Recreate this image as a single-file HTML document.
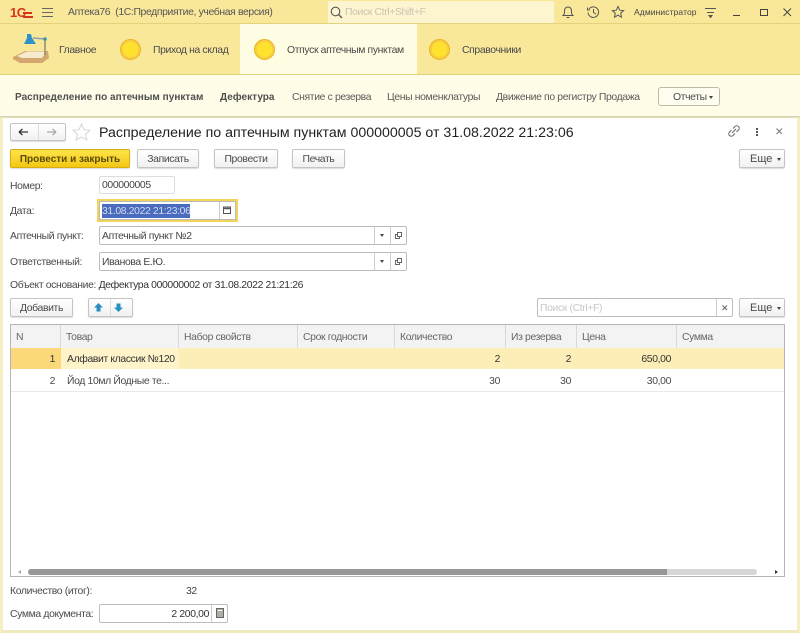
<!DOCTYPE html>
<html lang="ru"><head><meta charset="utf-8"><title>Аптека76</title>
<style>
*{box-sizing:border-box}
html,body{margin:0;padding:0;background:#fff}
#w{position:absolute;left:0;top:0;width:800px;height:633px;overflow:hidden;background:#fff;font-family:"Liberation Sans",sans-serif;font-size:10.4px;letter-spacing:-.36px;color:#4a4a4a;filter:blur(.3px)}
.a{position:absolute}
.t{position:absolute;white-space:nowrap;line-height:16px;height:16px}
.btn{position:absolute;background:linear-gradient(#fff,#f1f1f1);border:1px solid #c4c4c4;border-radius:2px;text-align:center;color:#4a4a4a;box-shadow:0 1px 1px #ddd;line-height:19px;white-space:nowrap}
.inp{position:absolute;background:#fff;border:1px solid #bdbdbd;border-radius:2px;line-height:19px;padding-left:2px;color:#444;white-space:nowrap}
.dd{position:absolute;width:0;height:0;border-left:2px solid transparent;border-right:2px solid transparent;border-top:3px solid #444}
.coin{position:absolute;width:21px;height:21px;border-radius:50%;background:#ffe22e;border:1.5px solid #eeb11c;box-shadow:inset 0 0 0 2px #f7cf45}
.h{position:absolute;top:0;height:23px;line-height:25px;color:#666;background:#f3f3f3;padding-left:5px;border-right:1px solid #d9d9d9;white-space:nowrap}
.b{font-size:10px;font-weight:bold;letter-spacing:.03px;color:#4f4f4f}
</style></head><body><div id="w">

<!-- title bar -->
<div class="a" style="left:0;top:0;width:800px;height:24px;background:#f9e89a;border-bottom:1px solid #e3d27e"></div>
<div class="t" style="left:10px;top:5px;color:#d9341f;font-weight:bold;font-size:13px;letter-spacing:-.5px">1С</div>
<div class="a" style="left:23px;top:12px;width:9px;height:1.500px;background:#d9341f"></div>
<div class="a" style="left:23px;top:16px;width:10px;height:2px;background:#d9341f"></div>
<svg class="a" style="left:42px;top:7px" width="12" height="11"><path d="M0 1.500H11M0 5.500H11M0 9.500H11" stroke="#666" stroke-width="1"/></svg>
<div class="t" style="left:68px;top:5px;color:#555">Аптека76&nbsp; (1С:Предприятие, учебная версия)</div>
<div class="a" style="left:328px;top:1px;width:226px;height:22px;background:#fdf4d0"></div>
<svg class="a" style="left:330px;top:6px" width="13" height="13"><circle cx="5.500" cy="5.500" r="4.300" fill="none" stroke="#555" stroke-width="1.100"/><path d="M8.500 8.500L12 12" stroke="#555" stroke-width="1.300"/></svg>
<div class="t" style="left:345px;top:5px;color:#c9c4b0">Поиск Ctrl+Shift+F</div>
<svg class="a" style="left:561px;top:5px" width="14" height="14" fill="none" stroke="#555"><path d="M2 10.500H12L10.500 8.500V5.500C10.500 3.500 9 2 7 2S3.500 3.500 3.500 5.500V8.500ZM5.500 12.500H8.500"/></svg>
<svg class="a" style="left:586px;top:5px" width="14" height="14" fill="none" stroke="#555"><path d="M3 4A5.300 5.300 0 1 1 2 7.500M1.500 2.500V5H4M7.500 4V7.500L10 9"/></svg>
<svg class="a" style="left:611px;top:5px" width="14" height="14" fill="none" stroke="#555"><path d="M7 1.500L8.700 5.200L12.600 5.600L9.700 8.200L10.500 12.200L7 10.200L3.500 12.200L4.300 8.200L1.400 5.600L5.300 5.200Z"/></svg>
<div class="t" style="left:634px;top:4px;font-size:8.500px;color:#444;letter-spacing:.1px">Администратор</div>
<svg class="a" style="left:705px;top:7px" width="12" height="12" fill="none" stroke="#555"><path d="M0 1.500H11M2 5.500H9"/><path d="M4 8.500H7L5.500 10.500Z" fill="#555"/></svg>
<div class="a" style="left:733px;top:15px;width:7px;height:1px;background:#444"></div>
<div class="a" style="left:760px;top:9px;width:8px;height:7px;border:1px solid #444"></div>
<svg class="a" style="left:783px;top:8px" width="9" height="9"><path d="M.5 .5L8 8M8 .5L.5 8" stroke="#444"/></svg>

<!-- sections -->
<div class="a" style="left:0;top:24px;width:800px;height:51px;background:#f9e89a;border-bottom:1px solid #e0d17e"></div>
<div class="a" style="left:240px;top:24px;width:177px;height:50px;background:#fffde4"></div>
<svg class="a" style="left:12px;top:33px" width="38" height="32">
<path d="M1 24L13 18H36L37 25L30 30H8L1 26Z" fill="#d3a76d"/><path d="M5 23L15 18.500H34L30 25H10Z" fill="#f6eccd"/>
<path d="M21 5L33 6" stroke="#8ca2a8" stroke-width="1.500"/><path d="M33 6V22" stroke="#8b8b70" stroke-width="1.500"/><circle cx="33" cy="6" r="1.800" fill="#3e94b4"/>
<path d="M15 1H19L20 5L24 11H12L15 5Z" fill="#2d93c6"/>
</svg>
<div class="t" style="left:59px;top:43px">Главное</div>
<div class="coin" style="left:120px;top:39px"></div>
<div class="t" style="left:153px;top:43px">Приход на склад</div>
<div class="coin" style="left:254px;top:39px"></div>
<div class="t" style="left:287px;top:43px">Отпуск аптечным пунктам</div>
<div class="coin" style="left:429px;top:39px"></div>
<div class="t" style="left:462px;top:43px">Справочники</div>

<!-- nav -->
<div class="a" style="left:0;top:75px;width:800px;height:42px;background:#fffde8;border-bottom:1px solid #d5d2bd"></div>
<div class="t b" style="left:15px;top:90px">Распределение по аптечным пунктам</div>
<div class="t b" style="left:220px;top:90px">Дефектура</div>
<div class="t" style="left:292px;top:90px;color:#5a5a5a">Снятие с резерва</div>
<div class="t" style="left:387px;top:90px;color:#5a5a5a">Цены номенклатуры</div>
<div class="t" style="left:496px;top:90px;color:#5a5a5a">Движение по регистру Продажа</div>
<div class="a" style="left:658px;top:87px;width:62px;height:19px;border:1px solid #bdbba8;border-radius:3px;background:#fffef0"></div>
<div class="t" style="left:673px;top:90px">Отчеты</div>
<div class="dd" style="left:709px;top:96px"></div>

<!-- form frame -->
<div class="a" style="left:0;top:117px;width:800px;height:516px;border:3px solid #f4efc5;border-top:1px solid #e4dfa9;border-bottom:3px solid #efe9c0;background:#fff"></div>

<!-- form header -->
<div class="btn" style="left:10px;top:123px;width:56px;height:18px"></div>
<div class="a" style="left:38px;top:124px;width:1px;height:16px;background:#ddd"></div>
<svg class="a" style="left:18px;top:127px" width="44" height="10"><path d="M1 5H10M1 5L4.500 2M1 5L4.500 8" stroke="#333" stroke-width="1.300" fill="none"/><path d="M29 5H38M38 5L34.500 2M38 5L34.500 8" stroke="#aaa" stroke-width="1.300" fill="none"/></svg>
<svg class="a" style="left:72px;top:123px" width="19" height="18"><path d="M9.500 1L12 6.700L18 7.300L13.500 11.200L14.900 17L9.500 14L4.100 17L5.500 11.200L1 7.300L7 6.700Z" fill="#fff" stroke="#d5d5d5"/></svg>
<div class="t" style="left:99px;top:125px;font-size:14.2px;letter-spacing:0;line-height:16px;height:16px;color:#222">Распределение по аптечным пунктам 000000005 от 31.08.2022 21:23:06</div>
<svg class="a" style="left:727px;top:124px" width="14" height="14" fill="none" stroke="#666"><path d="M6 4.500L8 2.500C9 1.500 10.500 1.500 11.500 2.500S12.500 5 11.500 6L9.500 8M8 9.500L6 11.500C5 12.500 3.500 12.500 2.500 11.500S1.500 9 2.500 8L4.500 6M5 9L9 5"/></svg>
<div class="a" style="left:756px;top:128px;width:2px;height:2px;background:#555;box-shadow:0 3px #555,0 6px #555"></div>
<svg class="a" style="left:776px;top:128px" width="7" height="7"><path d="M.5 .5L6 6M6 .5L.5 6" stroke="#777"/></svg>

<!-- commands -->
<div class="btn" style="left:10px;top:149px;width:120px;height:19px;background:linear-gradient(#ffe44a,#f3c713);border-color:#d9ad10;color:#5a4c08;font-weight:bold;font-size:10px;letter-spacing:0">Провести и закрыть</div>
<div class="btn" style="left:137px;top:149px;width:62px;height:19px">Записать</div>
<div class="btn" style="left:214px;top:149px;width:64px;height:19px">Провести</div>
<div class="btn" style="left:292px;top:149px;width:53px;height:19px">Печать</div>
<div class="btn" style="left:739px;top:149px;width:46px;height:19px;text-align:left;padding-left:10px;font-size:11px;letter-spacing:0">Еще</div>
<div class="dd" style="left:777px;top:158px"></div>

<!-- fields -->
<div class="t" style="left:10px;top:179px">Номер:</div>
<div class="inp" style="left:99px;top:176px;width:76px;height:18px;border-color:#ddd;line-height:17px">000000005</div>
<div class="t" style="left:10px;top:204px">Дата:</div>
<div class="a" style="left:97px;top:199px;width:141px;height:23px;border:2px solid #f2d45b;background:#fff"></div>
<div class="a" style="left:99px;top:201px;width:137px;height:19px;border:1px solid #bbb"></div>
<div class="a" style="left:102px;top:204px;width:88px;height:14px;background:#4a6cbf"></div>
<div class="t" style="left:102px;top:204px;color:#d3dbee;height:14px;line-height:15px;letter-spacing:-.36px">31.08.2022 21:23:06</div>
<div class="a" style="left:219px;top:202px;width:1px;height:17px;background:#ccc"></div>
<svg class="a" style="left:223px;top:206px" width="9" height="9"><rect x=".5" y="1" width="7" height="6.500" fill="none" stroke="#555"/><path d="M.5 2.500H7.500" stroke="#555" stroke-width="1.500"/></svg>

<div class="t" style="left:10px;top:229px">Аптечный пункт:</div>
<div class="inp" style="left:99px;top:226px;width:308px;height:19px">Аптечный пункт №2</div>
<div class="a" style="left:374px;top:227px;width:1px;height:17px;background:#ccc"></div>
<div class="a" style="left:390px;top:227px;width:1px;height:17px;background:#ccc"></div>
<div class="dd" style="left:380px;top:234px"></div>
<svg class="a" style="left:394px;top:231px" width="9" height="9" fill="none" stroke="#666"><rect x="3.500" y="1.500" width="4" height="4"/><path d="M3.500 3.500H1.500V7.500H5.500V5.500"/></svg>
<div class="t" style="left:10px;top:255px">Ответственный:</div>
<div class="inp" style="left:99px;top:252px;width:308px;height:19px">Иванова Е.Ю.</div>
<div class="a" style="left:374px;top:253px;width:1px;height:17px;background:#ccc"></div>
<div class="a" style="left:390px;top:253px;width:1px;height:17px;background:#ccc"></div>
<div class="dd" style="left:380px;top:260px"></div>
<svg class="a" style="left:394px;top:257px" width="9" height="9" fill="none" stroke="#666"><rect x="3.500" y="1.500" width="4" height="4"/><path d="M3.500 3.500H1.500V7.500H5.500V5.500"/></svg>
<div class="t" style="left:10px;top:278px">Объект основание: <span style="color:#333">Дефектура 000000002 от 31.08.2022 21:21:26</span></div>

<!-- table commands -->
<div class="btn" style="left:10px;top:298px;width:63px;height:19px">Добавить</div>
<div class="btn" style="left:88px;top:298px;width:45px;height:19px"></div>
<div class="a" style="left:110px;top:299px;width:1px;height:17px;background:#ddd"></div>
<svg class="a" style="left:94px;top:302px" width="34" height="11"><path d="M4.500 1L9 5.500H6.500V9.500H2.500V5.500H0Z" fill="#2a8fc2"/><path d="M22.500 1.500H26.500V5.500H29L24.500 10L20 5.500H22.500Z" fill="#2a8fc2"/></svg>
<div class="inp" style="left:537px;top:298px;width:196px;height:19px;color:#c8c8c8">Поиск (Ctrl+F)</div>
<div class="a" style="left:716px;top:299px;width:1px;height:17px;background:#ccc"></div>
<svg class="a" style="left:722px;top:305px" width="6" height="6"><path d="M.5 .5L5 5M5 .5L.5 5" stroke="#666"/></svg>
<div class="btn" style="left:739px;top:298px;width:46px;height:19px;text-align:left;padding-left:10px;font-size:11px;letter-spacing:0">Еще</div>
<div class="dd" style="left:777px;top:307px"></div>

<!-- table -->
<div class="a" style="left:10px;top:324px;width:775px;height:253px;border:1px solid #b5b5b5;background:#fff;overflow:hidden">
  <div class="a" style="left:0;top:0;width:773px;height:23px;background:#f3f3f3"></div>
  <div class="h" style="left:0;width:50px">N</div>
  <div class="h" style="left:50px;width:118px">Товар</div>
  <div class="h" style="left:168px;width:119px">Набор свойств</div>
  <div class="h" style="left:287px;width:97px">Срок годности</div>
  <div class="h" style="left:384px;width:111px">Количество</div>
  <div class="h" style="left:495px;width:71px">Из резерва</div>
  <div class="h" style="left:566px;width:100px">Цена</div>
  <div class="h" style="left:666px;width:107px;border-right:0">Сумма</div>

  <div class="a" style="left:0;top:23px;width:773px;height:21px;background:#fdeeb8"></div>
  <div class="a" style="left:0;top:23px;width:50px;height:21px;background:#fbd87a"></div>
  <div class="a" style="left:50px;top:23px;width:118px;height:21px;background:#fff3c9"></div>
  <div class="t" style="left:0;width:44px;top:27px;text-align:right;color:#333">1</div>
  <div class="t" style="left:56px;top:27px;color:#333">Алфавит классик №120</div>
  <div class="t" style="left:384px;width:105px;top:27px;text-align:right;color:#333">2</div>
  <div class="t" style="left:495px;width:65px;top:27px;text-align:right;color:#333">2</div>
  <div class="t" style="left:566px;width:94px;top:27px;text-align:right;color:#333">650,00</div>
  <div class="a" style="left:0;top:66px;width:773px;height:1px;background:#e9e9e9"></div>

  <div class="t" style="left:0;width:44px;top:49px;text-align:right">2</div>
  <div class="t" style="left:56px;top:49px">Йод 10мл Йодные те...</div>
  <div class="t" style="left:384px;width:105px;top:49px;text-align:right">30</div>
  <div class="t" style="left:495px;width:65px;top:49px;text-align:right">30</div>
  <div class="t" style="left:566px;width:94px;top:49px;text-align:right">30,00</div>

  <div class="a" style="left:17px;top:244px;width:639px;height:6px;background:#979797;border-radius:3px 0 0 3px"></div>
  <div class="a" style="left:656px;top:244px;width:90px;height:6px;background:#d6d6d6;border-radius:0 3px 3px 0"></div>
  <div class="a" style="left:7px;top:245px;width:0;height:0;border:2px solid transparent;border-right:3px solid #aaa;border-left:0"></div>
  <div class="a" style="left:764px;top:245px;width:0;height:0;border:2px solid transparent;border-left:3px solid #333;border-right:0"></div>
</div>

<!-- footer -->
<div class="t" style="left:10px;top:584px">Количество (итог):</div>
<div class="t" style="left:186px;top:584px;color:#444">32</div>
<div class="t" style="left:10px;top:607px">Сумма документа:</div>
<div class="inp" style="left:99px;top:604px;width:129px;height:19px;text-align:right;padding:0 18px 0 0;color:#333;line-height:20px">2 200,00</div>
<div class="a" style="left:211px;top:605px;width:1px;height:17px;background:#ccc"></div>
<svg class="a" style="left:216px;top:608px" width="8" height="10"><rect x=".5" y=".5" width="7" height="9" fill="#aab0a8" stroke="#666"/><path d="M2 2.500H6" stroke="#fff"/></svg>
</div></body></html>
